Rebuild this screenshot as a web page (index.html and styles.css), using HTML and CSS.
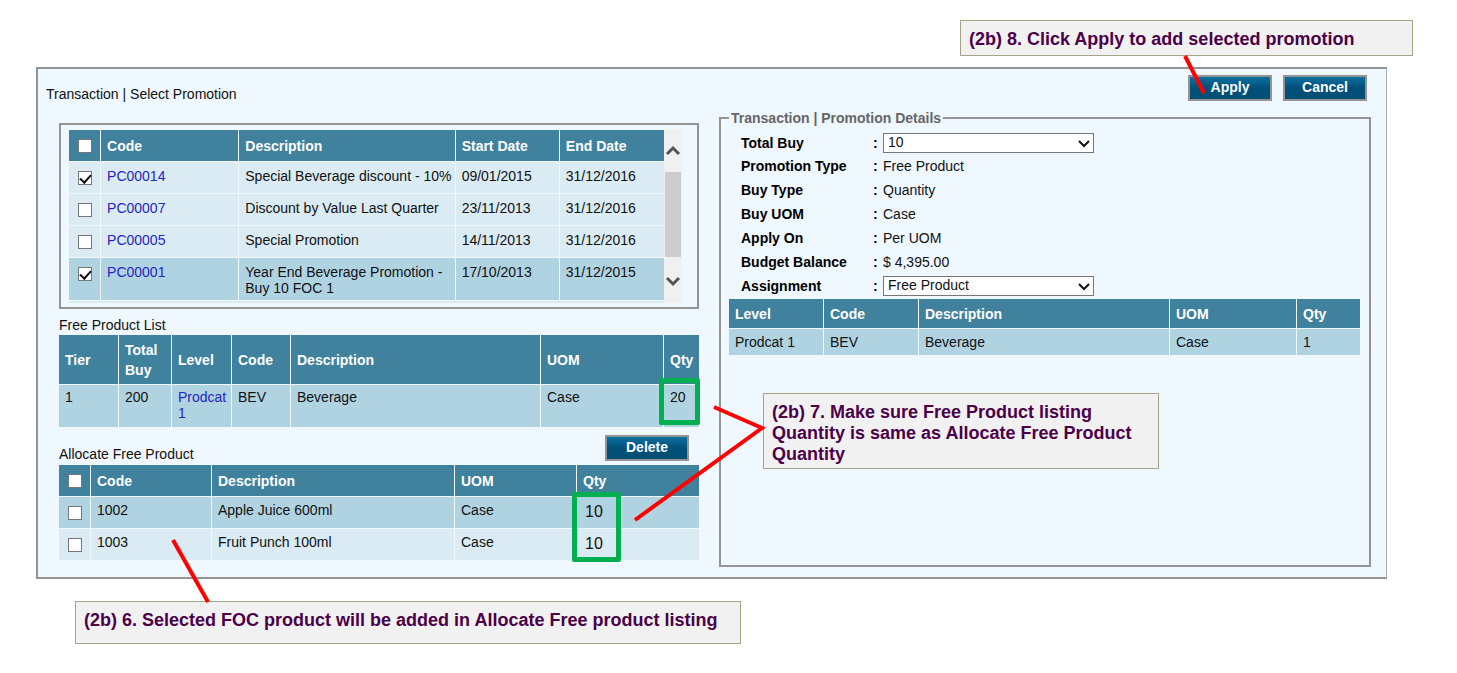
FILE: index.html
```html
<!DOCTYPE html>
<html lang="en">
<head>
<meta charset="utf-8">
<title>Select Promotion</title>
<link rel="stylesheet" href="styles.css">
</head>
<body>
<div class="page">
  <main class="panel">
    <header class="panel-head">
      <h1 class="panel-title">Transaction | Select Promotion</h1>
      <div class="actions">
        <button type="button" class="btn">Apply</button>
        <button type="button" class="btn">Cancel</button>
      </div>
    </header>
    <div class="columns">
      <div class="left">
        <div class="promo-box">
          <div class="promo-view">
            <table class="grid promo">
              <colgroup><col class="w32"><col class="w138"><col class="w216"><col class="w104"><col class="w104"></colgroup>
              <thead>
                <tr><th class="check"><input type="checkbox" aria-label="Select all promotions"></th><th>Code</th><th>Description</th><th>Start Date</th><th>End Date</th></tr>
              </thead>
              <tbody>
                <tr><td class="check"><input type="checkbox" checked aria-label="PC00014"></td><td><a href="#">PC00014</a></td><td>Special Beverage discount - 10%</td><td>09/01/2015</td><td>31/12/2016</td></tr>
                <tr><td class="check"><input type="checkbox" aria-label="PC00007"></td><td><a href="#">PC00007</a></td><td>Discount by Value Last Quarter</td><td>23/11/2013</td><td>31/12/2016</td></tr>
                <tr><td class="check"><input type="checkbox" aria-label="PC00005"></td><td><a href="#">PC00005</a></td><td>Special Promotion</td><td>14/11/2013</td><td>31/12/2016</td></tr>
                <tr class="dark tall"><td class="check"><input type="checkbox" checked aria-label="PC00001"></td><td><a href="#">PC00001</a></td><td>Year End Beverage Promotion - Buy 10 FOC 1</td><td>17/10/2013</td><td>31/12/2015</td></tr>
              </tbody>
            </table>
          </div>
          <div class="scroll" aria-hidden="true">
            <svg class="arrow" viewBox="0 0 18 16"><path d="M3 12 L9 6 L15 12" /></svg>
            <div class="track"><div class="thumb"></div></div>
            <svg class="arrow" viewBox="0 0 18 16"><path d="M3 4 L9 10 L15 4" /></svg>
          </div>
        </div>

        <h2 class="caption">Free Product List</h2>
        <table class="grid free">
          <colgroup><col class="w60"><col class="w53"><col class="w60"><col class="w59"><col class="w250"><col class="w123"><col class="w35"></colgroup>
          <thead>
            <tr><th>Tier</th><th>Total Buy</th><th>Level</th><th>Code</th><th>Description</th><th>UOM</th><th>Qty</th></tr>
          </thead>
          <tbody>
            <tr class="dark tall"><td>1</td><td>200</td><td><a href="#">Prodcat 1</a></td><td>BEV</td><td>Beverage</td><td>Case</td><td class="mark">20<span class="ring ring-one"></span></td></tr>
          </tbody>
        </table>

        <div class="allocate-head">
          <h2 class="label">Allocate Free Product</h2>
          <button type="button" class="btn">Delete</button>
        </div>
        <table class="grid allocate">
          <colgroup><col class="w32"><col class="w121"><col class="w243"><col class="w122"><col class="w122"></colgroup>
          <thead>
            <tr><th class="check"><input type="checkbox" aria-label="Select all products"></th><th>Code</th><th>Description</th><th>UOM</th><th>Qty</th></tr>
          </thead>
          <tbody>
            <tr class="dark"><td class="check"><input type="checkbox" aria-label="1002"></td><td>1002</td><td>Apple Juice 600ml</td><td>Case</td><td class="mark amount">10<span class="ring ring-two"></span></td></tr>
            <tr><td class="check"><input type="checkbox" aria-label="1003"></td><td>1003</td><td>Fruit Punch 100ml</td><td>Case</td><td class="amount">10</td></tr>
          </tbody>
        </table>
      </div>

      <fieldset class="details">
        <legend>Transaction | Promotion Details</legend>
        <div class="fields">
          <label class="name" for="total-buy">Total Buy</label><span class="colon">:</span>
          <div class="pick"><select id="total-buy"><option>10</option></select><svg viewBox="0 0 12 8"><path d="M1 1 L6 6 L11 1" /></svg></div>
          <span class="name">Promotion Type</span><span class="colon">:</span><span>Free Product</span>
          <span class="name">Buy Type</span><span class="colon">:</span><span>Quantity</span>
          <span class="name">Buy UOM</span><span class="colon">:</span><span>Case</span>
          <span class="name">Apply On</span><span class="colon">:</span><span>Per UOM</span>
          <span class="name">Budget Balance</span><span class="colon">:</span><span>$ 4,395.00</span>
          <label class="name" for="assignment">Assignment</label><span class="colon">:</span>
          <div class="pick"><select id="assignment"><option>Free Product</option></select><svg viewBox="0 0 12 8"><path d="M1 1 L6 6 L11 1" /></svg></div>
        </div>
        <table class="grid assigned">
          <colgroup><col class="w95"><col class="w95"><col class="w251"><col class="w127"><col class="w63"></colgroup>
          <thead>
            <tr><th>Level</th><th>Code</th><th>Description</th><th>UOM</th><th>Qty</th></tr>
          </thead>
          <tbody>
            <tr class="dark"><td>Prodcat 1</td><td>BEV</td><td>Beverage</td><td>Case</td><td>1</td></tr>
          </tbody>
        </table>
      </fieldset>
    </div>
  </main>

  <aside class="note note-apply">(2b) 8. Click Apply to add selected promotion</aside>
  <aside class="note note-quantity">(2b) 7. Make sure Free Product listing Quantity is same as Allocate Free Product Quantity</aside>
  <aside class="note note-allocate">(2b) 6. Selected FOC product will be added in Allocate Free product listing</aside>
  <svg class="pointers" width="1457" height="673" viewBox="0 0 1457 673" aria-hidden="true">
    <path d="M1185 56 L1204 93" />
    <path d="M714 407 L762 428 L635 520" />
    <path d="M173 540 L208 602" />
  </svg>
</div>
</body>
</html>
```
FILE: styles.css
```css
* { box-sizing: border-box; }

body {
  margin: 0;
  background: #fff;
  color: #111;
  font: 14px/16px "Liberation Sans", Arial, sans-serif;
}

.page {
  position: relative;
  min-height: 100vh;
  padding: 67px 70px 94px 36px;
}

.panel {
  background: #eff7ff;
  border: 2px solid #949494;
  border-right: 1px solid #aaa;
  padding-bottom: 10px;
}

.panel-head {
  display: flex;
  justify-content: space-between;
  align-items: flex-end;
  padding: 6px 19px 8px 8px;
}

.panel-title, .caption, .label {
  margin: 0;
  font-size: 14px;
  font-weight: normal;
}

.panel-title { line-height: 14px; }

.actions { display: flex; gap: 11px; }

.btn {
  width: 84px;
  height: 26px;
  padding: 0 0 2px;
  border: 2px solid #949494;
  background: linear-gradient(#0a70a0, #02507a 50%, #014f72);
  color: #fff;
  font: bold 14px/18px "Liberation Sans", Arial, sans-serif;
}

.columns {
  display: grid;
  grid-template-columns: minmax(0, 640fr) minmax(0, 652fr);
  gap: 20px;
  padding: 0 15px 0 21px;
}

.left { padding-top: 14px; }

.promo-box {
  display: flex;
  border: 2px solid #949494;
  padding: 4px 15px 4px 8px;
}

.promo-view {
  flex: 1;
  padding-top: 1px;
  border-bottom: 2px solid #daebf3;
}

/* Data tables */
.grid {
  width: 100%;
  table-layout: fixed;
  border-collapse: separate;
  border-spacing: 0;
}

.grid th, .grid td {
  border-right: 1px solid #f0f8fd;
  border-bottom: 1px solid #f0f8fd;
  padding: 0 0 0 6px;
  text-align: left;
}

.grid th:last-child, .grid td:last-child { border-right: 0; }

.grid th {
  height: 32px;
  background: #40819d;
  color: #fff;
  line-height: 20px;
}

.grid td {
  height: 32px;
  padding-top: 5px;
  background: #daebf3;
  vertical-align: top;
}

.grid .dark td { background: #b0d3e2; }
.grid .tall td { height: 43px; }
.promo td { padding-top: 6px; }
.free th { height: 50px; }
.free td { padding-top: 4px; }
.assigned th { height: 30px; }
.assigned td { height: 27px; }
.grid a { color: #2626c4; text-decoration: none; }

.grid .check { padding-left: 0; padding-right: 0; text-align: center; }
.grid th.check { line-height: 0; }
.grid td.check { padding-top: 9px; line-height: 0; }

input[type="checkbox"] {
  appearance: none;
  width: 14px;
  height: 14px;
  margin: 0;
  border: 1px solid #777;
  background: #fff;
}

input[type="checkbox"]:checked::after {
  content: "";
  display: block;
  width: 5px;
  height: 9px;
  margin: 0 0 0 3px;
  border: solid #111;
  border-width: 0 2px 2px 0;
  transform: rotate(42deg);
}

.w32 { width: 32px; }
.w35 { width: 35px; }
.w53 { width: 53px; }
.w59 { width: 59px; }
.w60 { width: 60px; }
.w63 { width: 63px; }
.w95 { width: 95px; }
.w104 { width: 104px; }
.w121 { width: 121px; }
.w122 { width: 122px; }
.w123 { width: 123px; }
.w127 { width: 127px; }
.w138 { width: 138px; }
.w216 { width: 216px; }
.w243 { width: 243px; }
.w250 { width: 250px; }
.w251 { width: 251px; }

/* Scroll bar beside the promotions table */
.scroll {
  display: flex;
  flex-direction: column;
  width: 18px;
  padding: 13px 0;
  background: #f0f0f0;
}

.arrow { width: 18px; height: 16px; fill: none; stroke: #555; stroke-width: 3; }
.track { flex: 1; padding: 14px 1px 17px; }
.thumb { height: 100%; background: #cdcdcd; }

.caption { margin-top: 7px; line-height: 18px; padding-bottom: 1px; }

.allocate-head {
  display: flex;
  justify-content: space-between;
  align-items: flex-start;
  padding: 7px 10px 2px 0;
}

.label { padding-top: 10px; line-height: 18px; }

.grid .amount { padding-top: 7px; padding-left: 8px; font-size: 16px; }

/* Highlight frames */
.mark { position: relative; }
.ring { position: absolute; z-index: 1; border: 5px solid #00b050; border-radius: 2px; }
.ring-one { left: -5px; top: -7px; width: 41px; height: 47px; }
.ring-two { left: -5px; top: -5px; width: 49px; height: 70px; }

/* Promotion details */
.details {
  min-width: 0;
  min-height: 458px;
  margin: 0;
  padding: 5px 9px 8px 8px;
  border: 2px solid #949494;
}

.details legend {
  padding: 0 2px;
  color: #666;
  font-weight: bold;
  line-height: 18px;
}

.fields {
  display: grid;
  grid-template-columns: 132px 10px minmax(0, 211px);
  grid-template-rows: 22px;
  grid-auto-rows: 24px;
  align-items: center;
  padding: 0 0 1px 12px;
}

.name, .colon { font-weight: bold; color: #000; }

.pick { position: relative; display: flex; }

.pick select {
  appearance: none;
  width: 100%;
  height: 20px;
  padding: 0 20px 2px 4px;
  border: 1px solid #777;
  border-radius: 0;
  background: #fff;
  color: #111;
  font: 14px/16px "Liberation Sans", Arial, sans-serif;
}

.pick svg {
  position: absolute;
  right: 4px;
  top: 7px;
  width: 12px;
  height: 8px;
  fill: none;
  stroke: #111;
  stroke-width: 2;
  pointer-events: none;
}

/* Callouts laid over the screen */
.note {
  position: absolute;
  padding: 8px;
  border: 1px solid #a3a589;
  background: #f1f1f1;
  color: #4b0049;
  font-size: 18px;
  font-weight: bold;
  line-height: 21px;
}

.note-apply { left: 960px; top: 20px; width: 453px; height: 36px; }
.note-quantity { left: 763px; top: 393px; width: 396px; height: 76px; }
.note-allocate { left: 75px; top: 601px; width: 666px; height: 43px; }

.pointers {
  position: absolute;
  left: 0;
  top: 0;
  z-index: 2;
  fill: none;
  stroke: #f00;
  stroke-width: 4;
  pointer-events: none;
}
```
